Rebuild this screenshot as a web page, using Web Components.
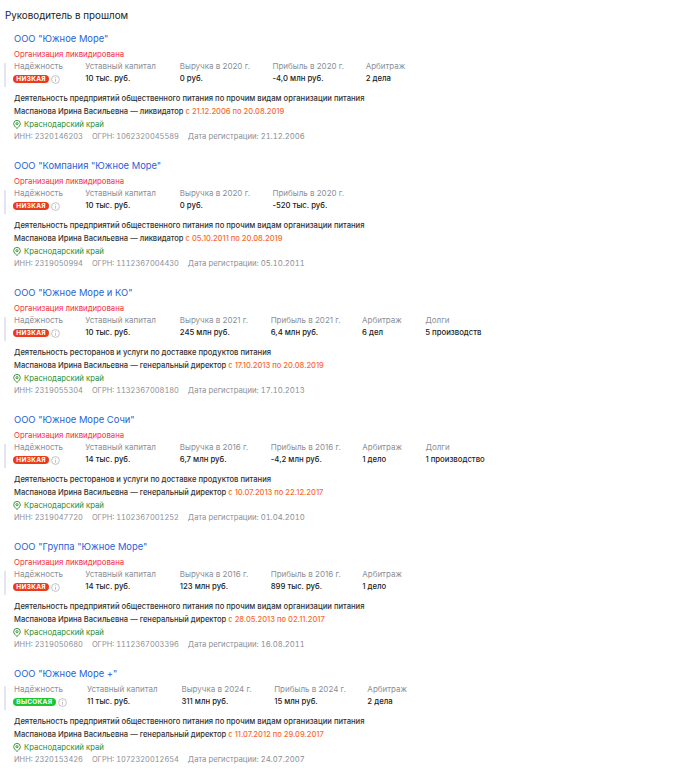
<!DOCTYPE html>
<html lang="ru"><head><meta charset="utf-8"><title>Руководитель в прошлом</title>
<style>
html,body{margin:0;background:#fff}
body{font-family:"Inter","Liberation Sans",sans-serif;font-size:7.75px;color:#333;width:692px;overflow:hidden}
</style></head><body>
<past-list></past-list>
<script>
const DATA=[
{t:'ООО "Южное Море"',liq:1,r:'low',y:2020,c:'10 тыс. руб.',rev:'0 руб.',p:'-4,0 млн руб.',a:'2 дела',act:'Деятельность предприятий общественного питания по прочим видам организации питания',role:'ликвидатор',d:'с 21.12.2006 по 20.08.2019',i:'2320146203',o:'1062320045589',reg:'21.12.2006'},
{t:'ООО "Компания "Южное Море"',liq:1,r:'low',y:2020,c:'10 тыс. руб.',rev:'0 руб.',p:'-520 тыс. руб.',act:'Деятельность предприятий общественного питания по прочим видам организации питания',role:'ликвидатор',d:'с 05.10.2011 по 20.08.2019',i:'2319050994',o:'1112367004430',reg:'05.10.2011'},
{t:'ООО "Южное Море и КО"',liq:1,r:'low',y:2021,c:'10 тыс. руб.',rev:'245 млн руб.',p:'6,4 млн руб.',a:'6 дел',dl:'5 производств',act:'Деятельность ресторанов и услуги по доставке продуктов питания',role:'генеральный директор',d:'с 17.10.2013 по 20.08.2019',i:'2319055304',o:'1132367008180',reg:'17.10.2013'},
{t:'ООО "Южное Море Сочи"',liq:1,r:'low',y:2016,c:'14 тыс. руб.',rev:'6,7 млн руб.',p:'-4,2 млн руб.',a:'1 дело',dl:'1 производство',act:'Деятельность ресторанов и услуги по доставке продуктов питания',role:'генеральный директор',d:'с 10.07.2013 по 22.12.2017',i:'2319047720',o:'1102367001252',reg:'01.04.2010'},
{t:'ООО "Группа "Южное Море"',liq:1,r:'low',y:2016,c:'14 тыс. руб.',rev:'123 млн руб.',p:'899 тыс. руб.',a:'1 дело',act:'Деятельность предприятий общественного питания по прочим видам организации питания',role:'генеральный директор',d:'с 28.05.2013 по 02.11.2017',i:'2319050680',o:'1112367003396',reg:'16.08.2011'},
{t:'ООО "Южное Море +"',liq:0,r:'high',y:2024,c:'11 тыс. руб.',rev:'311 млн руб.',p:'15 млн руб.',a:'2 дела',act:'Деятельность предприятий общественного питания по прочим видам организации питания',role:'генеральный директор',d:'с 11.07.2012 по 29.09.2017',i:'2320153426',o:'1072320012654',reg:'24.07.2007'}];

class RiskBadge extends HTMLElement{
  constructor(){super();const high=this.getAttribute('level')==='high';
    this.attachShadow({mode:'open'}).innerHTML=`<style>
    :host{display:flex;align-items:center;gap:2px;height:12px;margin:1px ${high?'-2px':'0'} -1px -1px}
    b{display:block;background:${high?'#1fc52f':'#ee3a1c'};color:#fff;font-size:6.5px;font-weight:700;line-height:8px;padding:0 3.3px;border-radius:4px;letter-spacing:.3px}
    svg{display:block}</style><b>${high?'ВЫСОКАЯ':'НИЗКАЯ'}</b>
    <svg width="9" height="9" viewBox="0 0 9 9" fill="none" stroke="#a9a9a9" stroke-width=".7"><circle cx="4.500" cy="4.500" r="3.900"/><path d="M4.500 3.800V6.800M4.500 2.200v.8"/></svg>`;}
}
customElements.define('risk-badge',RiskBadge);

class StatCell extends HTMLElement{
  constructor(){super();this.attachShadow({mode:'open'}).innerHTML=`<style>
    :host{display:block;flex:none}
    .l{color:#8b8f96;font-size:8px;line-height:12px;white-space:nowrap}
    .v{color:#222;font-weight:500;line-height:12px;white-space:nowrap;display:block}
    </style><div class="l">${this.getAttribute('label')}</div><div class="v"><slot></slot></div>`;}
}
customElements.define('stat-cell',StatCell);

class CompanyCard extends HTMLElement{
  set data(x){
    const cell=(l,v)=>v?`<stat-cell label="${l}">${v}</stat-cell>`:'';
    this.attachShadow({mode:'open'}).innerHTML=`<style>
    :host{display:block;padding-left:14px;margin-bottom:16px}
    h3{margin:0;font-size:9.4px;font-weight:400;line-height:14px;color:#2a5fd8;white-space:nowrap}
    .liq{margin:2px 0 0;color:#f8283a;line-height:12px}
    .wrap{display:flex;margin:${x.liq?0:'2px'} 0 0 -10px}
    .bar{flex:none;width:2px;height:24px;margin:3px 8px -3px 0;background:#e3e5f7}
    .stats{display:flex;gap:23.500px}
    stat-cell:nth-child(1){margin-right:-1px}
    stat-cell:nth-child(2){margin-right:.5px}
    stat-cell:nth-child(3){margin-right:-1px}
    stat-cell:nth-child(4){margin-right:-2px}
    .row{line-height:12.500px;white-space:nowrap}
    .act{margin-top:9px;color:#333;font-weight:500;font-size:7.65px}
    .who{color:#333;font-weight:500;font-size:7.55px}.who i{font-style:normal;color:#fb6a2c}
    .geo{display:flex;align-items:center;gap:3px;color:#2a8a2a;margin-left:-1px}
    .geo svg{display:block}
    .ids{color:#8b8f96;display:flex;gap:9px;font-size:7.45px;font-variant-numeric:tabular-nums}
    .ids span:last-child{font-size:7.7px}
    </style>
    <h3>${x.t}</h3>
    ${x.liq?'<div class="liq">Организация ликвидирована</div>':''}
    <div class="wrap"><div class="bar"></div><div class="stats">
      <stat-cell label="Надёжность"><risk-badge level="${x.r}"></risk-badge></stat-cell>
      ${cell('Уставный капитал',x.c)}${cell('Выручка в '+x.y+' г.',x.rev)}${cell('Прибыль в '+x.y+' г.',x.p)}${cell('Арбитраж',x.a)}${cell('Долги',x.dl)}
    </div></div>
    <div class="row act">${x.act}</div>
    <div class="row who">Маспанова Ирина Васильевна — ${x.role} <i>${x.d}</i></div>
    <div class="row geo"><svg width="8" height="9" viewBox="0 0 8 9" fill="none" stroke="#2a8a2a" stroke-width=".9"><path d="M4 8.500C2.200 6.900.7 5.400.7 3.700a3.300 3.300 0 0 1 6.600 0C7.300 5.400 5.800 6.900 4 8.500Z"/><circle cx="4" cy="3.700" r="1.100"/></svg>Краснодарский край</div>
    <div class="row ids"><span>ИНН: ${x.i}</span><span>ОГРН: ${x.o}</span><span>Дата регистрации: ${x.reg}</span></div>`;
  }
}
customElements.define('company-card',CompanyCard);

class PastList extends HTMLElement{
  constructor(){super();const s=this.attachShadow({mode:'open'});
    s.innerHTML=`<style>:host{display:block;padding-top:9px}
    h2{margin:0 0 9px 5px;font-size:9.8px;font-weight:400;line-height:14px;color:#222}</style><h2>Руководитель в прошлом</h2>`;
    DATA.forEach(d=>{const c=document.createElement('company-card');c.data=d;s.appendChild(c);});}
}
customElements.define('past-list',PastList);
</script></body></html>
